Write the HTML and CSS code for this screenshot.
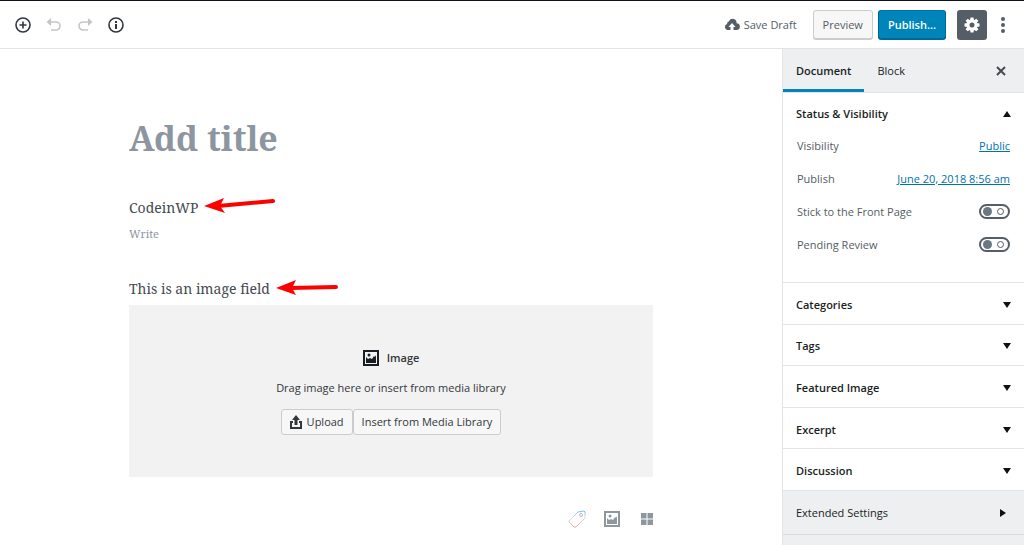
FILE: index.html
```html
<!DOCTYPE html>
<html lang="en">
<head>
    <meta charset="UTF-8">
    <meta name="viewport" content="width=device-width, initial-scale=1.0">
    <title>Add New Post</title>
    <link rel="stylesheet" href="styles.css">
</head>
<body>

    <header class="topbar">
        <div class="tools">
            <button class="icon-button" aria-label="Add block">
                <svg width="18" height="18" viewBox="0 0 18 18" fill="none" stroke="#32373c" stroke-width="1.6"><circle cx="9" cy="9" r="7"/><path d="M9 5.5v7M5.5 9h7"/></svg>
            </button>
            <button class="icon-button" aria-label="Undo" disabled>
                <svg width="18" height="18" viewBox="0 0 18 18"><path d="M5 6h6a3.7 3.7 0 0 1 0 8H6" fill="none" stroke="#c3c6c9" stroke-width="1.6"/><path d="M1.5 6L6 2v8z" fill="#c3c6c9"/></svg>
            </button>
            <button class="icon-button" aria-label="Redo" disabled>
                <svg width="18" height="18" viewBox="0 0 18 18"><path d="M13 6H7a3.7 3.7 0 0 0 0 8h5" fill="none" stroke="#c3c6c9" stroke-width="1.6"/><path d="M16.500 6L12 2v8z" fill="#c3c6c9"/></svg>
            </button>
            <button class="icon-button" aria-label="Content information">
                <svg width="18" height="18" viewBox="0 0 18 18"><circle cx="9" cy="9" r="7" fill="none" stroke="#32373c" stroke-width="1.6"/><path d="M8 5h2v2H8zM8 8h2v5H8z" fill="#32373c"/></svg>
            </button>
        </div>
        <div class="actions">
            <button class="save">
                <svg width="16" height="16" viewBox="0 0 16 16"><path d="M12.600 6.200A3.200 3.200 0 0 1 12.300 13H9.500v-3h2L8 6 4.500 10h2v3H3.600A3.100 3.100 0 0 1 3 7a3 3 0 0 1 2-2.800A4 4 0 0 1 12.600 6.200z" fill="#555d66"/></svg>
                Save Draft
            </button>
            <button class="button preview">Preview</button>
            <button class="button publish">Publish...</button>
            <button class="settings" aria-label="Settings">
                <svg width="18" height="18" viewBox="0 0 18 18"><g fill="#fff"><path d="M7.500 1.500h3l.5 3H7zM7.500 16.500h3l.5-3H7z"/><path d="M7.500 1.500h3l.5 3H7zM7.500 16.500h3l.5-3H7z" transform="rotate(45 9 9)"/><path d="M7.500 1.500h3l.5 3H7zM7.500 16.500h3l.5-3H7z" transform="rotate(90 9 9)"/><path d="M7.500 1.500h3l.5 3H7zM7.500 16.500h3l.5-3H7z" transform="rotate(135 9 9)"/></g><circle cx="9" cy="9" r="4" fill="none" stroke="#fff" stroke-width="3"/></svg>
            </button>
            <button class="more" aria-label="More">
                <svg width="6" height="18" viewBox="0 0 6 18" fill="#555d66"><circle cx="3" cy="3" r="2"/><circle cx="3" cy="9" r="2"/><circle cx="3" cy="15" r="2"/></svg>
            </button>
        </div>
    </header>

    <div class="layout">
        <main class="editor">
            <div class="content">
                <input class="title" type="text" placeholder="Add title" aria-label="Add title">

                <div class="field">
                    <p>CodeinWP</p>
                    <svg class="arrow" width="72" height="18" viewBox="0 0 72 18"><path d="M14 10L69 5" stroke="#f00" stroke-width="4" stroke-linecap="round"/><path d="M0 10L20 2l-4 8 5 7z" fill="#f00"/></svg>
                </div>
                <input class="write" type="text" placeholder="Write" aria-label="Write">

                <div class="field">
                    <p>This is an image field</p>
                    <svg class="arrow" width="64" height="18" viewBox="0 0 64 18"><path d="M14 11L60 10" stroke="#f00" stroke-width="4" stroke-linecap="round"/><path d="M0 11L20 3l-4 8 4 7z" fill="#f00"/></svg>
                </div>

                <section class="placeholder">
                    <h2>
                        <svg width="16" height="16" viewBox="0 0 16 16" fill="#191e23"><path d="M0 0h16v16H0zM2 2v12h12V2z" fill-rule="evenodd"/><path d="M3 13V7l2 2 2-1 2 1 2-3 1 1 1-2v8z"/><circle cx="6" cy="5" r="1.500"/></svg>
                        Image
                    </h2>
                    <p>Drag image here or insert from media library</p>
                    <div class="media-buttons">
                        <button class="button small">
                            <svg width="12" height="14" viewBox="0 0 12 14" fill="#32373c"><path d="M6 0l4 5H7.500v5h-3V5H2z"/><path d="M3 7H1v6h10V7H9" fill="none" stroke="#32373c" stroke-width="2"/></svg>
                            Upload
                        </button>
                        <button class="button small">Insert from Media Library</button>
                    </div>
                </section>

                <div class="shortcuts">
                    <button class="icon-button" aria-label="Add tag">
                        <svg width="18" height="18" viewBox="0 0 18 18" fill="none">
                            <defs><linearGradient id="tag" x1="0" y1="0" x2="0" y2="1"><stop offset="0" stop-color="#72bfe9"/><stop offset=".4" stop-color="#d9dce8"/><stop offset="1" stop-color="#f7a49c"/></linearGradient></defs>
                            <path d="M10 2l6-1 1 1v6l-9 9H6l-5-5v-1z" stroke="url(#tag)"/><circle cx="13" cy="5" r="1.500" stroke="#b4bac0"/>
                        </svg>
                    </button>
                    <button class="icon-button" aria-label="Add image">
                        <svg width="16" height="16" viewBox="0 0 16 16" fill="#8f979e"><path d="M0 0h16v16H0zM2 2v12h12V2z" fill-rule="evenodd"/><path d="M3 13V7l2 2 2-1 2 1 2-3 1 1 1-2v8z"/><circle cx="6" cy="5" r="1.500"/></svg>
                    </button>
                    <button class="icon-button" aria-label="Add gallery">
                        <svg width="12" height="12" viewBox="0 0 12 12" fill="#8f979e"><path d="M0 0h5.500v5.500H0zM6.500 0H12v5.500H6.500zM0 6.500h5.500V12H0zM6.500 6.500H12V12H6.500z"/></svg>
                    </button>
                </div>
            </div>
        </main>

        <aside class="sidebar">
            <div class="tabs">
                <button class="tab active">Document</button>
                <button class="tab">Block</button>
                <button class="close" aria-label="Close settings">
                    <svg width="10" height="10" viewBox="0 0 10 10"><path d="M1 1l8 8M9 1L1 9" stroke="#444b52" stroke-width="2"/></svg>
                </button>
            </div>

            <section class="status">
                <button class="panel-title">Status &amp; Visibility <span class="up"></span></button>
                <div class="row"><span>Visibility</span><a href="#">Public</a></div>
                <div class="row"><span>Publish</span><a href="#">June 20, 2018 8:56 am</a></div>
                <div class="row"><label for="sticky">Stick to the Front Page</label><input class="toggle" type="checkbox" id="sticky"></div>
                <div class="row"><label for="pending">Pending Review</label><input class="toggle" type="checkbox" id="pending"></div>
            </section>

            <div class="panels">
                <button class="panel-title">Categories <span class="down"></span></button>
                <button class="panel-title">Tags <span class="down"></span></button>
                <button class="panel-title">Featured Image <span class="down"></span></button>
                <button class="panel-title">Excerpt <span class="down"></span></button>
                <button class="panel-title">Discussion <span class="down"></span></button>
            </div>

            <button class="extended">Extended Settings <span class="right"></span></button>
        </aside>
    </div>

</body>
</html>
```

FILE: styles.css
```css
* {
    box-sizing: border-box;
}
body {
    margin: 0;
    min-height: 100vh;
    display: flex;
    flex-direction: column;
    border-top: 1px solid #10131c;
    background-color: #fff;
    color: #555d66;
    font-family: "Open Sans", "Noto Sans", sans-serif;
    font-size: 11px;
    line-height: 18px;
}
button {
    padding: 0;
    border: none;
    background: none;
    color: inherit;
    font: inherit;
    cursor: pointer;
}
svg {
    display: block;
    flex-shrink: 0;
}
p, h2 {
    margin: 0;
}
.topbar {
    display: flex;
    justify-content: space-between;
    align-items: center;
    height: 48px;
    padding: 0 18px 0 14px;
    border-bottom: 1px solid #e2e4e7;
}
.tools {
    display: flex;
    gap: 13px;
}
.icon-button {
    display: flex;
    align-items: center;
    justify-content: center;
    width: 18px;
    height: 18px;
}
.actions {
    display: flex;
    align-items: center;
}
.save {
    display: flex;
    align-items: center;
    gap: 4px;
    margin-right: 16px;
}
.button {
    height: 29px;
    padding: 0 9px;
    border: 1px solid #ccc;
    border-radius: 3px;
    background-color: #f7f7f7;
    box-shadow: 0 1px 0 #ccc;
}
.publish {
    margin: 0 11px 0 5px;
    border-color: #0073aa #006799 #006799;
    background-color: #0085ba;
    box-shadow: 0 1px 0 #006799;
    color: #fff;
    font-weight: 600;
}
.settings {
    display: flex;
    align-items: center;
    justify-content: center;
    width: 30px;
    height: 30px;
    border-radius: 3px;
    background-color: #555d66;
}
.more {
    margin-left: 13px;
}
.layout {
    flex: 1;
    display: flex;
}
.editor {
    flex: 1;
    padding: 64px 24px 16px;
}
.content {
    max-width: 524px;
    margin: 0 auto;
    font-family: "Noto Serif", "DejaVu Serif Condensed", serif;
}
.title, .write {
    display: block;
    width: 100%;
    padding: 0;
    border: none;
    outline: none;
    background: none;
    font-family: inherit;
}
.title {
    height: 50px;
    margin-bottom: 33px;
    font-size: 34px;
    font-weight: 700;
}
.write {
    height: 18px;
    margin-bottom: 35px;
    font-size: 11px;
}
.title::placeholder, .write::placeholder {
    color: #8d96a0;
}
.field {
    display: flex;
    align-items: center;
    gap: 6px;
    height: 24px;
    margin-bottom: 4px;
    color: #444b52;
    font-size: 14px;
}
.arrow {
    margin-bottom: 6px;
}
.placeholder {
    display: flex;
    flex-direction: column;
    align-items: center;
    gap: 12px;
    min-height: 172px;
    padding: 44px 16px 42px;
    background-color: #f2f2f2;
    color: #32373c;
    font-family: "Open Sans", "Noto Sans", sans-serif;
}
.placeholder h2 {
    display: flex;
    align-items: center;
    gap: 8px;
    font-size: 11px;
    font-weight: 600;
}
.media-buttons {
    display: flex;
}
.small {
    display: flex;
    align-items: center;
    gap: 5px;
    height: 26px;
    padding: 0 8px;
    box-shadow: none;
}
.shortcuts {
    display: flex;
    justify-content: flex-end;
    gap: 23px;
    margin-top: 33px;
}
.shortcuts .icon-button {
    width: 12px;
}
.sidebar {
    display: flex;
    flex-direction: column;
    width: 242px;
    border-left: 1px solid #e2e4e7;
    color: #191e23;
}
.tabs {
    display: flex;
    height: 44px;
    background-color: #edeff0;
    border-bottom: 1px solid #e2e4e7;
}
.tab {
    height: 43px;
    padding: 3px 13px 0;
    border-bottom: 3px solid transparent;
    font-weight: 500;
}
.active {
    border-color: #0085ba;
    font-weight: 600;
}
.close {
    margin-left: auto;
    padding: 0 18px;
}
.status {
    min-height: 190px;
    border-bottom: 1px solid #e2e4e7;
}
.panel-title, .extended {
    display: flex;
    align-items: center;
    justify-content: space-between;
    width: 100%;
    height: 41px;
    padding: 0 13px;
    font-weight: 600;
}
.status .panel-title {
    margin-bottom: -5px;
}
.row {
    display: flex;
    align-items: center;
    justify-content: space-between;
    height: 33px;
    padding: 0 14px;
    color: #555d66;
}
.row a {
    color: #0073aa;
}
.toggle {
    appearance: none;
    display: flex;
    align-items: center;
    justify-content: space-between;
    width: 31px;
    height: 15px;
    margin: 0;
    padding: 0 4px 0 2px;
    border: 2px solid #555d66;
    border-radius: 8px;
    background-color: #fff;
}
.toggle::before {
    content: "";
    width: 9px;
    height: 9px;
    border-radius: 50%;
    background-color: #6c7781;
}
.toggle::after {
    content: "";
    width: 5px;
    height: 5px;
    border: 1px solid #555d66;
    border-radius: 50%;
}
.up, .down, .right {
    border: 4px solid transparent;
}
.up {
    border-top: none;
    border-bottom: 6px solid #111;
}
.down {
    border-bottom: none;
    border-top: 6px solid #111;
}
.right {
    margin-right: 5px;
    border-right: none;
    border-left: 6px solid #111;
}
.panels {
    display: grid;
    grid-auto-rows: 1fr;
    min-height: 208px;
}
.panels .panel-title {
    height: auto;
    padding-top: 3px;
    border-bottom: 1px solid #e2e4e7;
}
.extended {
    height: 44px;
    border-bottom: 1px solid #d9dcdf;
    background-color: #edeff0;
    font-weight: 500;
}
.sidebar::after {
    content: "";
    flex: 1;
    background-color: #edeff0;
}
```
